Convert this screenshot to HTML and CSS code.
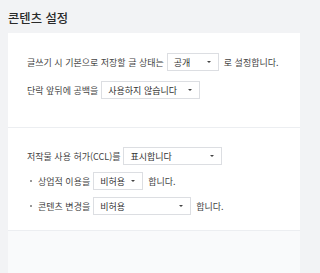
FILE: index.html
```html
<!DOCTYPE html>
<html lang="ko">
<head>
<meta charset="utf-8">
<link rel="stylesheet" href="styles.css">
</head>
<body>
<div class="page">
  <h1 class="title">콘텐츠 설정</h1>
  <div class="panel">
    <section class="sec sec1">
      <div class="row">
        <span class="txt">글쓰기 시 기본으로 저장할 글 상태는</span>
        <div class="sel w52"><span>공개</span><i class="arr"></i></div>
        <span class="txt">로 설정합니다.</span>
      </div>
      <div class="row">
        <span class="txt">단락 앞뒤에 공백을</span>
        <div class="sel w99"><span>사용하지 않습니다</span><i class="arr"></i></div>
      </div>
    </section>
    <section class="sec sec2">
      <div class="row">
        <span class="txt">저작물 사용 허가(CCL)를</span>
        <div class="sel w99"><span>표시합니다</span><i class="arr"></i></div>
      </div>
      <div class="row sub">
        <i class="dot"></i>
        <span class="txt">상업적 이용을</span>
        <div class="sel w50"><span>비허용</span><i class="arr"></i></div>
        <span class="txt">합니다.</span>
      </div>
      <div class="row sub">
        <i class="dot"></i>
        <span class="txt">콘텐츠 변경을</span>
        <div class="sel w98"><span>비허용</span><i class="arr"></i></div>
        <span class="txt">합니다.</span>
      </div>
    </section>
    <div class="rest"></div>
  </div>
</div>
</body>
</html>
```
FILE: styles.css
```css
* { box-sizing: border-box; }
html, body { margin: 0; padding: 0; }
body {
  background: #f2f3f5;
  font-family: "Noto Sans CJK KR", "Noto Sans", sans-serif;
  color: #444;
  width: 300px;
  height: 273px;
  overflow: hidden;
}
.page { display: flex; flex-direction: column; height: 273px; }
.title {
  margin: 0;
  height: 33px;
  padding: 0 0 0 8px;
  font-size: 12.3px;
  font-weight: 500;
  line-height: 36px;
  color: #2a2a2a;
}
.panel {
  margin-left: 8px;
  flex: 1;
  display: flex;
  flex-direction: column;
  background: #f9fafb;
}
.sec {
  background: #fff;
  display: flex;
  flex-direction: column;
  padding-left: 19px;
}
.sec1 {
  height: 95px;
  padding-top: 20px;
  gap: 10px;
  border-bottom: 1px solid #eceef1;
}
.sec2 {
  height: 103px;
  padding-top: 19px;
  gap: 7px;
  border-bottom: 1px solid #eceef1;
}
.rest { flex: 1; }
.row {
  display: flex;
  align-items: center;
  height: 18px;
  font-size: 9px;
}
.txt { white-space: nowrap; }
.sel {
  height: 18px;
  border: 1px solid #dcdee2;
  background: #fff;
  margin: 0 5px 0 3px;
  display: flex;
  align-items: center;
  justify-content: space-between;
  padding: 0 7px 0 6px;
  color: #333;
  white-space: nowrap;
}
.w52 { width: 52px; }
.w99 { width: 99px; }
.w50 { width: 50px; }
.w98 { width: 98px; }
.arr {
  width: 0; height: 0;
  border-left: 2px solid transparent;
  border-right: 2px solid transparent;
  border-top: 2.5px solid #444;
}
.sub { padding-left: 3px; }
.dot {
  width: 2px; height: 2px;
  background: #777;
  border-radius: 50%;
  margin-right: 6px;
}
```
